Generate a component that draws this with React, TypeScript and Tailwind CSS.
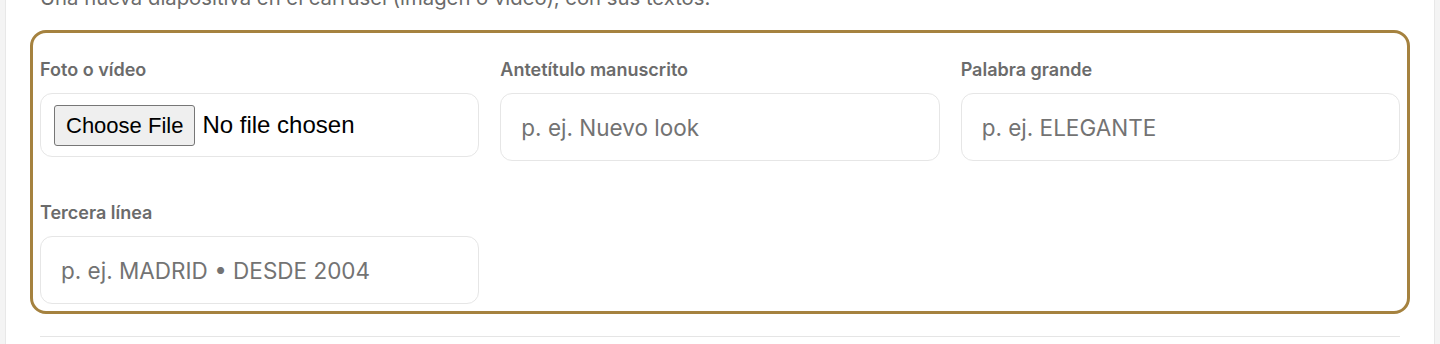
import React from "react";

const font = { fontFamily: "Inter, 'Noto Sans', sans-serif" };

function Label({ children }: { children: React.ReactNode }) {
  return (
    <label className="block text-[18px] leading-[24px] font-semibold text-[#6b6b6b] mb-[11px]">
      {children}
    </label>
  );
}

function TextField({ label, placeholder }: { label: string; placeholder: string }) {
  return (
    <div>
      <Label>{label}</Label>
      <input
        type="text"
        placeholder={placeholder}
        className="block w-full h-[68px] rounded-[12px] border border-[#e6e6e6] bg-white px-[20px] text-[22.5px] text-[#333] placeholder:text-[#737373] outline-none"
      />
    </div>
  );
}

export default function App() {
  return (
    <div className="h-[344px] overflow-hidden bg-[#f4f4f4] px-[5px]" style={font}>
      <div className="flex h-full flex-col bg-white border-x border-[#e8e8e8] px-[24px]">
        <p className="-mt-[17px] pl-[10px] text-[20.3px] leading-[30px] text-[#6b6b6b] whitespace-nowrap">
          Una nueva diapositiva en el carrusel (imagen o vídeo), con sus textos.
        </p>
        <div className="mt-[17px] rounded-[16px] border-[3px] border-[#a5823f] pt-[25px] px-[7px] pb-[7px]">
          <div className="grid grid-cols-3 gap-x-[21px] gap-y-[40px]">
            <div>
              <Label>Foto o vídeo</Label>
              <div className="flex h-[64px] items-center rounded-[12px] border border-[#e6e6e6] bg-white px-[13px]">
                <input
                  type="file"
                  className="text-[24px] text-black file:mr-[7px] file:rounded-[3px] file:border file:border-[#767676] file:bg-[#efefef] file:px-[11px] file:py-[3px] file:text-[22px] file:text-black"
                  style={{ fontFamily: "'Liberation Sans', Arial, sans-serif" }}
                />
              </div>
            </div>
            <TextField label="Antetítulo manuscrito" placeholder="p. ej. Nuevo look" />
            <TextField label="Palabra grande" placeholder="p. ej. ELEGANTE" />
            <TextField label="Tercera línea" placeholder="p. ej. MADRID • DESDE 2004" />
          </div>
        </div>
        <div className="mx-[10px] mt-[22px] border-t border-[#e5e5e5]" />
      </div>
    </div>
  );
}
